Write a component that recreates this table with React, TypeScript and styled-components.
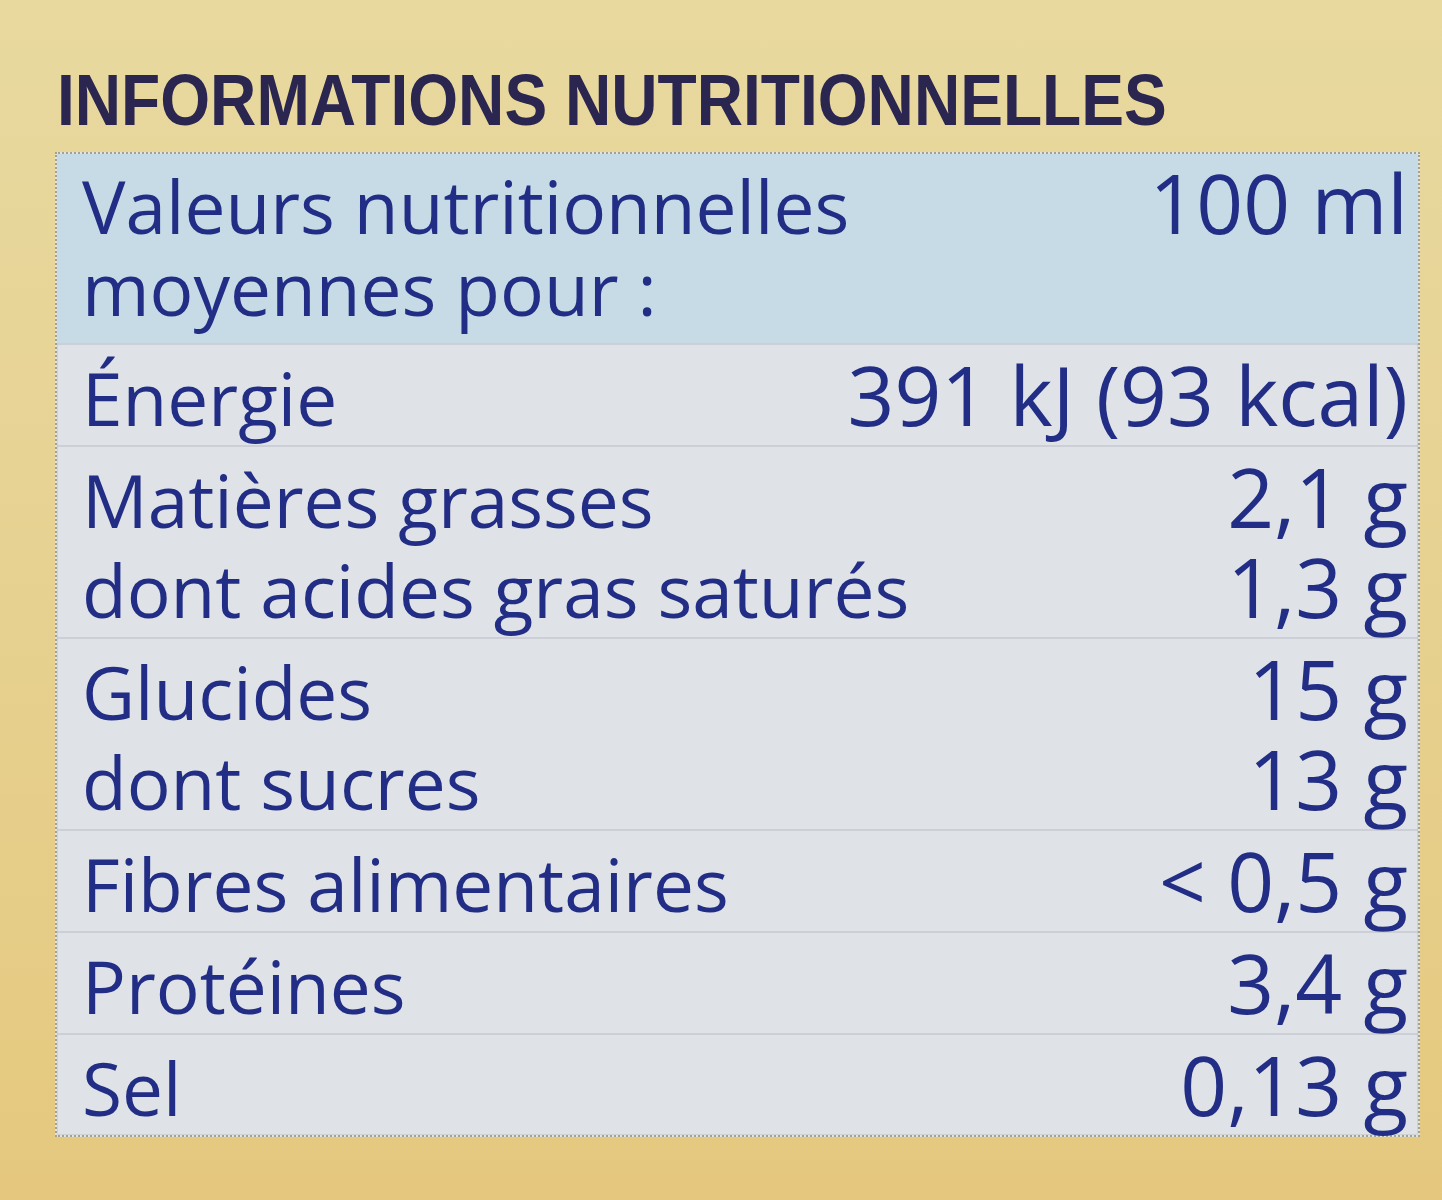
import React from "react";
import styled, { createGlobalStyle } from "styled-components";

const Global = createGlobalStyle`
  html, body { margin: 0; padding: 0; }
  body {
    width: 1442px;
    height: 1200px;
    overflow: hidden;
    background: linear-gradient(180deg, #e8d99f 0%, #e7d394 40%, #e5c87e 100%);
  }
`;

const Page = styled.div`
  width: 1442px;
  height: 1200px;
  box-sizing: border-box;
  padding: 63px 22px 0 55px;
  display: flex;
  flex-direction: column;
`;

const Title = styled.h1`
  margin: 0 0 0 2px;
  height: 73px;
  font-family: "Liberation Sans", Arial, sans-serif;
  font-weight: 700;
  font-size: 73px;
  line-height: 1;
  color: #2a2650;
  white-space: nowrap;
  span {
    display: inline-block;
    transform: scaleX(0.878);
    transform-origin: left center;
  }
`;

const Table = styled.div`
  margin-top: 16px;
  display: flex;
  flex-direction: column;
  background: #dfe2e6;
  border: 2px dotted #a4a28a;
  box-shadow: inset 0 0 0 1px rgba(150, 150, 130, 0.2);
`;

const Group = styled.div<{ $head?: boolean }>`
  display: flex;
  flex-direction: column;
  padding: ${(p) => (p.$head ? "7px 0 2px" : "8px 0 2px")};
  background: ${(p) => (p.$head ? "#c6dbe5" : "transparent")};
  & + & {
    border-top: 2px solid rgba(175, 182, 190, 0.4);
  }
`;

const Line = styled.div`
  display: flex;
  justify-content: space-between;
  align-items: baseline;
  height: 90px;
  padding: 0 10px 0 25px;
`;

const Label = styled.span`
  font-family: "Open Sans", "Liberation Sans", sans-serif;
  font-weight: 500;
  font-size: 73px;
  line-height: 1;
  color: #222d86;
  white-space: nowrap;
`;

const Value = styled.span`
  font-family: "Open Sans", "Liberation Sans", sans-serif;
  font-weight: 500;
  font-size: 82px;
  line-height: 1;
  color: #222d86;
  white-space: nowrap;
`;

type Row = [string, string][];

const rows: Row[] = [
  [["Énergie", "391 kJ (93 kcal)"]],
  [
    ["Matières grasses", "2,1 g"],
    ["dont acides gras saturés", "1,3 g"],
  ],
  [
    ["Glucides", "15 g"],
    ["dont sucres", "13 g"],
  ],
  [["Fibres alimentaires", "< 0,5 g"]],
  [["Protéines", "3,4 g"]],
  [["Sel", "0,13 g"]],
];

export default function App() {
  return (
    <>
      <Global />
      <Page>
        <Title>
          <span>INFORMATIONS NUTRITIONNELLES</span>
        </Title>
        <Table>
          <Group $head>
            <Line>
              <Label>Valeurs nutritionnelles</Label>
              <Value>100 ml</Value>
            </Line>
            <Line>
              <Label>moyennes pour :</Label>
              <Value></Value>
            </Line>
          </Group>
          {rows.map((g, i) => (
            <Group key={i}>
              {g.map(([l, v]) => (
                <Line key={l}>
                  <Label>{l}</Label>
                  <Value>{v}</Value>
                </Line>
              ))}
            </Group>
          ))}
        </Table>
      </Page>
    </>
  );
}
